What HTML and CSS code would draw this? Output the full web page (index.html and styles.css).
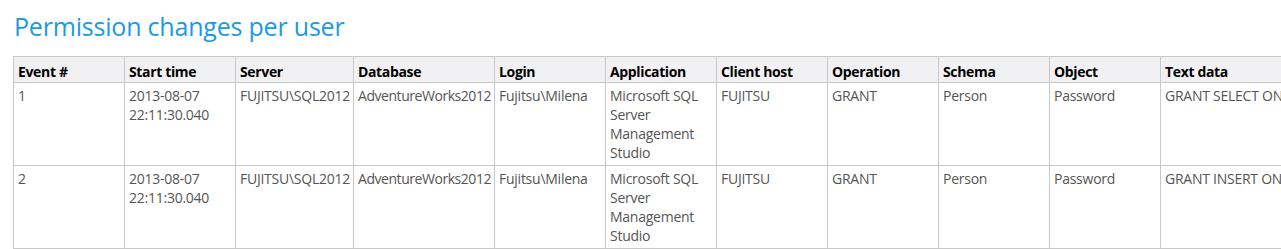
FILE: index.html
```html
<!DOCTYPE html>
<html lang="en">
<head>
<meta charset="utf-8">
<title>Permission changes per user</title>
<link rel="stylesheet" href="styles.css">
</head>
<body>
<div class="page">
  <h1 class="title">Permission changes per user</h1>
  <table class="report">
    <colgroup>
      <col class="c-event">
      <col class="c-std">
      <col class="c-server">
      <col class="c-db">
      <col class="c-std">
      <col class="c-std">
      <col class="c-std">
      <col class="c-std">
      <col class="c-std">
      <col class="c-std">
      <col class="c-text">
    </colgroup>
    <thead>
      <tr>
        <th>Event #</th>
        <th>Start time</th>
        <th>Server</th>
        <th>Database</th>
        <th>Login</th>
        <th>Application</th>
        <th>Client host</th>
        <th>Operation</th>
        <th>Schema</th>
        <th>Object</th>
        <th>Text data</th>
      </tr>
    </thead>
    <tbody>
      <tr>
        <td>1</td>
        <td>2013-08-07 22:11:30.040</td>
        <td class="nowrap">FUJITSU\SQL2012</td>
        <td class="nowrap tight">AdventureWorks2012</td>
        <td>Fujitsu\Milena</td>
        <td>Microsoft SQL Server Management Studio</td>
        <td>FUJITSU</td>
        <td>GRANT</td>
        <td>Person</td>
        <td>Password</td>
        <td class="nowrap">GRANT SELECT ON [Person].[Password] TO [Milena]</td>
      </tr>
      <tr>
        <td>2</td>
        <td>2013-08-07 22:11:30.040</td>
        <td class="nowrap">FUJITSU\SQL2012</td>
        <td class="nowrap tight">AdventureWorks2012</td>
        <td>Fujitsu\Milena</td>
        <td>Microsoft SQL Server Management Studio</td>
        <td>FUJITSU</td>
        <td>GRANT</td>
        <td>Person</td>
        <td>Password</td>
        <td class="nowrap">GRANT INSERT ON [Person].[Password] TO [Milena]</td>
      </tr>
    </tbody>
  </table>
</div>
</body>
</html>
```

FILE: styles.css
```css
html, body {
  margin: 0;
  padding: 0;
  background: #ffffff;
}

body {
  font-family: "Open Sans", "Noto Sans", sans-serif;
  overflow: hidden;
}

.page {
  padding: 0 0 0 13px;
}

.title {
  margin: 0;
  padding: 9px 0 0 1px;
  height: 56px;
  box-sizing: border-box;
  font-size: 25px;
  font-weight: 400;
  line-height: 34px;
  color: #1b9be3;
  letter-spacing: -0.2px;
}

.report {
  border-collapse: collapse;
  table-layout: fixed;
  width: 1547px;
  font-size: 14px;
  line-height: 19px;
}

.c-event { width: 111px; }
.c-std { width: 111px; }
.c-server { width: 118px; }
.c-db { width: 141px; }
.c-text { width: 400px; }

.report th,
.report td {
  border: 1px solid #c8c8c8;
  text-align: left;
  vertical-align: top;
  overflow: visible;
}

.report th {
  background: #f1f1f3;
  color: #000000;
  font-weight: 700;
  letter-spacing: -0.35px;
  padding: 5px 2px 1px 4px;
}

.report td {
  color: #555555;
  letter-spacing: -0.25px;
  padding: 3px 2px 3px 4px;
  height: 76px;
}

.nowrap {
  white-space: nowrap;
}

.report td.tight {
  letter-spacing: -0.45px;
}
```
